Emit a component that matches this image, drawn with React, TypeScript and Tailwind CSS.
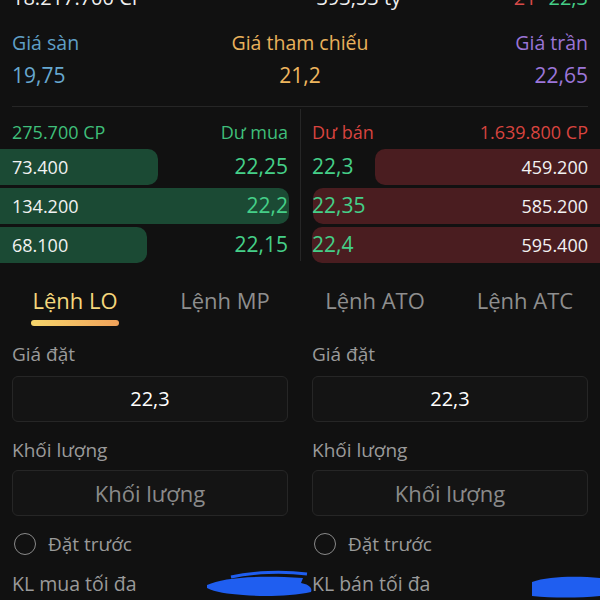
import React from "react";

const font = { fontFamily: '"Open Sans", "Noto Sans", sans-serif' };

function BuyRow({ vol, price, w }: { vol: string; price: string; w: number }) {
  return (
    <div className="relative h-[36px] flex items-center justify-between px-[12px]">
      <div className="absolute left-0 top-0 h-full rounded-r-[10px] bg-[#1b4a34]" style={{ width: w }} />
      <span className="relative text-[18px] text-[#f2f2f2]">{vol}</span>
      <span className="relative text-[21px] text-[#45cf88]">{price}</span>
    </div>
  );
}

function SellRow({ vol, price, off }: { vol: string; price: string; off: number }) {
  return (
    <div className="relative h-[36px] flex items-center justify-between pl-[11px] pr-[12px]">
      <div className="absolute right-0 top-0 h-full rounded-l-[10px] bg-[#4a1d20]" style={{ left: off }} />
      <span className="relative text-[21px] text-[#45cf88]">{price}</span>
      <span className="relative text-[18px] text-[#f2f2f2]">{vol}</span>
    </div>
  );
}

function FormCol({ max }: { max: string }) {
  return (
    <div className="flex flex-col px-[12px]">
      <div className="h-[24px] flex items-center text-[19px] text-[#9a9a9a] mt-[6px]">Giá đặt</div>
      <div className="mt-[10px] h-[46px] rounded-[6px] border border-[#262626] bg-[#141414] flex items-center justify-center text-[20px] text-white">22,3</div>
      <div className="mt-[16px] h-[24px] flex items-center text-[19px] text-[#9a9a9a]">Khối lượng</div>
      <div className="mt-[8px] h-[46px] rounded-[6px] border border-[#262626] bg-[#141414] flex items-center justify-center text-[22px] text-[#8a8a8a]">Khối lượng</div>
      <div className="mt-[16px] h-[24px] flex items-center gap-[12px]">
        <div className="w-[22px] h-[22px] rounded-full border-[1.5px] border-[#8a8a8a] ml-[2px]" />
        <span className="text-[19px] text-[#9a9a9a]">Đặt trước</span>
      </div>
      <div className="mt-[16px] h-[24px] flex items-center text-[19.5px] text-[#9a9a9a]">{max}</div>
    </div>
  );
}

export default function App() {
  return (
    <div className="relative w-[600px] h-[600px] overflow-hidden bg-[#111111]" style={font}>
      {/* clipped top row */}
      <div className="-mt-[14px] h-[24px] flex items-center justify-between px-[12px] text-[20px] text-[#f0f0f0]">
        <span>18.217.700 CP</span>
        <span className="ml-[60px]">393,53 tỷ</span>
        <span className="flex gap-[12px]">
          <span className="text-[#d84a48]">21</span>
          <span className="text-[#45cf88]">22,3</span>
        </span>
      </div>
      {/* price reference labels */}
      <div className="mt-[18px] h-[24px] grid grid-cols-3 items-center px-[12px] text-[19.5px]">
        <span className="text-[#5f9fc6]">Giá sàn</span>
        <span className="text-center text-[#e9b15c]">Giá tham chiếu</span>
        <span className="text-right text-[#9a74d6]">Giá trần</span>
      </div>
      <div className="mt-[8px] h-[24px] grid grid-cols-3 items-center px-[12px] text-[21px]">
        <span className="text-[#67a8d0]">19,75</span>
        <span className="text-center text-[#efb65e]">21,2</span>
        <span className="text-right text-[#9c76da]">22,65</span>
      </div>
      <div className="mx-[12px] mt-[22px] h-px bg-[#262626]" />
      {/* order book */}
      <div className="flex mt-[2px]">
        <div className="w-[300px] flex flex-col">
          <div className="h-[40px] pt-[6px] flex items-center justify-between px-[12px] text-[18px] text-[#3fbf7a]">
            <span>275.700 CP</span>
            <span>Dư mua</span>
          </div>
          <div className="flex flex-col gap-[3px]">
            <BuyRow vol="73.400" price="22,25" w={158} />
            <BuyRow vol="134.200" price="22,2" w={289} />
            <BuyRow vol="68.100" price="22,15" w={147} />
          </div>
        </div>
        <div className="w-px bg-[#262626] mb-[2px]" />
        <div className="flex-1 flex flex-col">
          <div className="h-[40px] pt-[6px] flex items-center justify-between pl-[11px] pr-[12px] text-[18px] text-[#d8443f]">
            <span>Dư bán</span>
            <span>1.639.800 CP</span>
          </div>
          <div className="flex flex-col gap-[3px]">
            <SellRow vol="459.200" price="22,3" off={74} />
            <SellRow vol="585.200" price="22,35" off={12} />
            <SellRow vol="595.400" price="22,4" off={11} />
          </div>
        </div>
      </div>
      {/* tabs */}
      <div className="mt-[23px] grid grid-cols-4 text-[22px]">
        {["Lệnh LO", "Lệnh MP", "Lệnh ATO", "Lệnh ATC"].map((t, i) => (
          <div key={t} className="flex flex-col items-center">
            <span className={i === 0 ? "text-[#f5d77c] leading-[28px]" : "text-[#8e8e8e] leading-[28px]"}>{t}</span>
            {i === 0 ? (
              <div className="mt-[6px] h-[6px] w-[88px] rounded-full bg-gradient-to-r from-[#f6d66c] to-[#f0a25a]" />
            ) : (
              <div className="mt-[6px] h-[6px]" />
            )}
          </div>
        ))}
      </div>
      {/* form */}
      <div className="mt-[10px] grid grid-cols-2">
        <FormCol max="KL mua tối đa" />
        <FormCol max="KL bán tối đa" />
      </div>
      {/* redaction scribbles */}
      <svg className="absolute left-[203px] top-[570px]" width="112" height="30" viewBox="0 0 112 30">
        <path d="M4 15 C20 8 50 5 100 8 L98 13 C104 14 110 17 108 22 C90 26 60 27 40 25 C25 24 12 22 4 18 Z" fill="#1f5ef0" />
        <path d="M28 7 C50 2 80 1 104 4" stroke="#1f5ef0" strokeWidth="3" fill="none" />
      </svg>
      <svg className="absolute left-[528px] top-[572px]" width="72" height="28" viewBox="0 0 72 28">
        <path d="M4 10 C20 4 50 4 72 6 L72 24 C50 26 25 26 4 24 Z" fill="#1f5ef0" />
      </svg>
    </div>
  );
}
